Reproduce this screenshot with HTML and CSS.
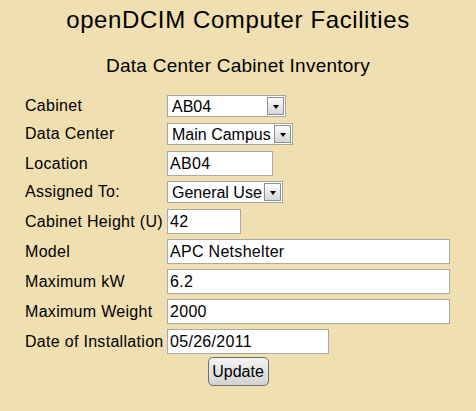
FILE: index.html
```html
<!DOCTYPE html>
<html lang="en">
<head>
    <meta charset="UTF-8">
    <title>openDCIM Computer Facilities</title>
    <link rel="stylesheet" href="styles.css">
</head>
<body>
    <div class="page">
        <h1>openDCIM Computer Facilities</h1>
        <h2>Data Center Cabinet Inventory</h2>
        <form class="cabinet-form" action="#" method="POST">
            <div class="row sel-row">
                <label for="cabinet">Cabinet</label>
                <span class="select-wrap w-cab">
                    <select id="cabinet" name="cabinet"><option>AB04</option></select>
                </span>
            </div>
            <div class="row sel-row">
                <label for="datacenter">Data Center</label>
                <span class="select-wrap w-dc">
                    <select id="datacenter" name="datacenter"><option>Main Campus</option></select>
                </span>
            </div>
            <div class="row">
                <label for="location">Location</label>
                <input type="text" id="location" name="location" class="w-loc" value="AB04">
            </div>
            <div class="row sel-row">
                <label for="assigned">Assigned To:</label>
                <span class="select-wrap w-as">
                    <select id="assigned" name="assigned"><option>General Use</option></select>
                </span>
            </div>
            <div class="row">
                <label for="height">Cabinet Height (U)</label>
                <input type="text" id="height" name="height" class="w-height" value="42">
            </div>
            <div class="row">
                <label for="model">Model</label>
                <input type="text" id="model" name="model" class="w-wide" value="APC Netshelter">
            </div>
            <div class="row">
                <label for="maxkw">Maximum kW</label>
                <input type="text" id="maxkw" name="maxkw" class="w-wide" value="6.2">
            </div>
            <div class="row">
                <label for="maxweight">Maximum Weight</label>
                <input type="text" id="maxweight" name="maxweight" class="w-wide" value="2000">
            </div>
            <div class="row">
                <label for="installdate">Date of Installation</label>
                <input type="text" id="installdate" name="installdate" class="w-date" value="05/26/2011">
            </div>
            <div class="button-container">
                <button type="submit">Update</button>
            </div>
        </form>
    </div>
</body>
</html>
```

FILE: styles.css
```css
body {
    font-family: "Liberation Sans", Arial, sans-serif;
    background-color: #f0dfb0;
    color: #000;
    margin: 0;
}

.page {
    padding-top: 6px;
}

h1 {
    font-size: 24px;
    font-weight: normal;
    letter-spacing: 0.6px;
    text-align: center;
    margin: 0;
}

h2 {
    font-size: 19px;
    font-weight: normal;
    letter-spacing: 0.25px;
    text-align: center;
    margin: 21px 0 0;
}

.cabinet-form {
    display: grid;
    grid-template-columns: 142px auto;
    row-gap: 5px;
    margin: 18px 0 0 25px;
}

.row {
    display: contents;
}

label {
    font-size: 16px;
    letter-spacing: 0.3px;
    align-self: center;
    white-space: nowrap;
}

.sel-row label,
.sel-row .select-wrap {
    height: 23px;
    line-height: 22px;
}

.select-wrap {
    position: relative;
    display: block;
}

select {
    appearance: none;
    -webkit-appearance: none;
    font-family: inherit;
    font-size: 16px;
    height: 22px;
    width: 100%;
    padding: 0 0 0 4px;
    border: 1px solid #a5a5a5;
    border-radius: 0;
    background: #fff;
    color: #000;
    display: block;
}

/* the little dropdown button */
.select-wrap::after {
    content: "";
    position: absolute;
    top: 2px;
    right: 2px;
    width: 15px;
    height: 16px;
    border: 1px solid #8e8e8e;
    background: linear-gradient(#fdfdfd, #d6d6d6);
    pointer-events: none;
}

.select-wrap::before {
    content: "";
    position: absolute;
    top: 10px;
    right: 7px;
    border-left: 3.5px solid transparent;
    border-right: 3.5px solid transparent;
    border-top: 4px solid #000;
    z-index: 1;
    pointer-events: none;
}

.w-cab { width: 119px; }
.w-dc { width: 126px; }
.w-as { width: 116px; }

input {
    font-family: inherit;
    font-size: 16px;
    letter-spacing: 0.3px;
    height: 25px;
    box-sizing: border-box;
    padding: 0 2px;
    border: 1px solid #a9a9a9;
    background: #fff;
    color: #000;
    margin: 0;
}

.w-loc { width: 106px; }
.w-height { width: 74px; }
.w-wide { width: 283px; }
.w-date { width: 162px; }

.button-container {
    grid-column: 1 / -1;
    display: flex;
    justify-content: center;
    margin: -2px 0 0 -25px;
}

button {
    font-family: inherit;
    font-size: 16px;
    height: 29px;
    width: 61px;
    padding: 0;
    border: 1px solid #6f6f6f;
    border-radius: 5px;
    background: linear-gradient(#f4f4f4, #d2d2d2);
    color: #000;
    cursor: pointer;
}

button:hover {
    background: linear-gradient(#eaf6fd, #c0dcf0);
}
```
